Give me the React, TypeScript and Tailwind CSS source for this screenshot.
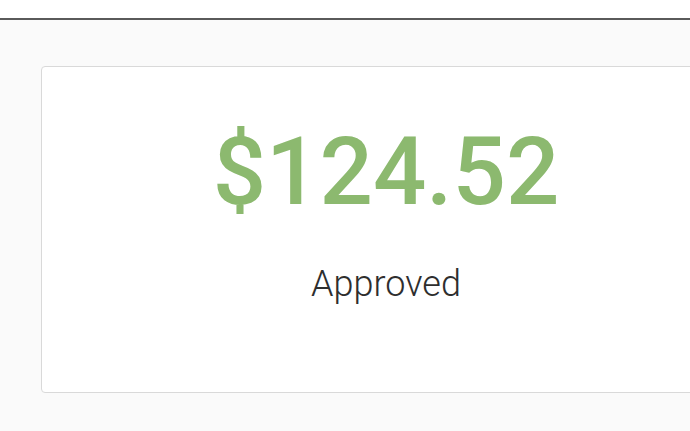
export default function App() {
  return (
    <div className="w-[690px] h-[431px] overflow-hidden bg-[#fafafa] font-['Roboto',sans-serif]">
      {/* top strip */}
      <div className="h-[18px] bg-white" />
      <div className="h-[2px] bg-[#5a5a5a]" />

      <div className="pt-[46px] pl-[41px]">
        <div className="w-[690px] h-[327px] shrink-0 bg-white border border-[#d9d9d9] rounded-[4px] flex flex-col items-center pt-[49px]">
          <div className="text-[94px] leading-[112px] font-medium text-[#8cb96f]">$124.52</div>
          <div className="mt-[35px] text-[36px] leading-[42px] font-light text-[#2e2e2e]">Approved</div>
        </div>
      </div>
    </div>
  );
}
